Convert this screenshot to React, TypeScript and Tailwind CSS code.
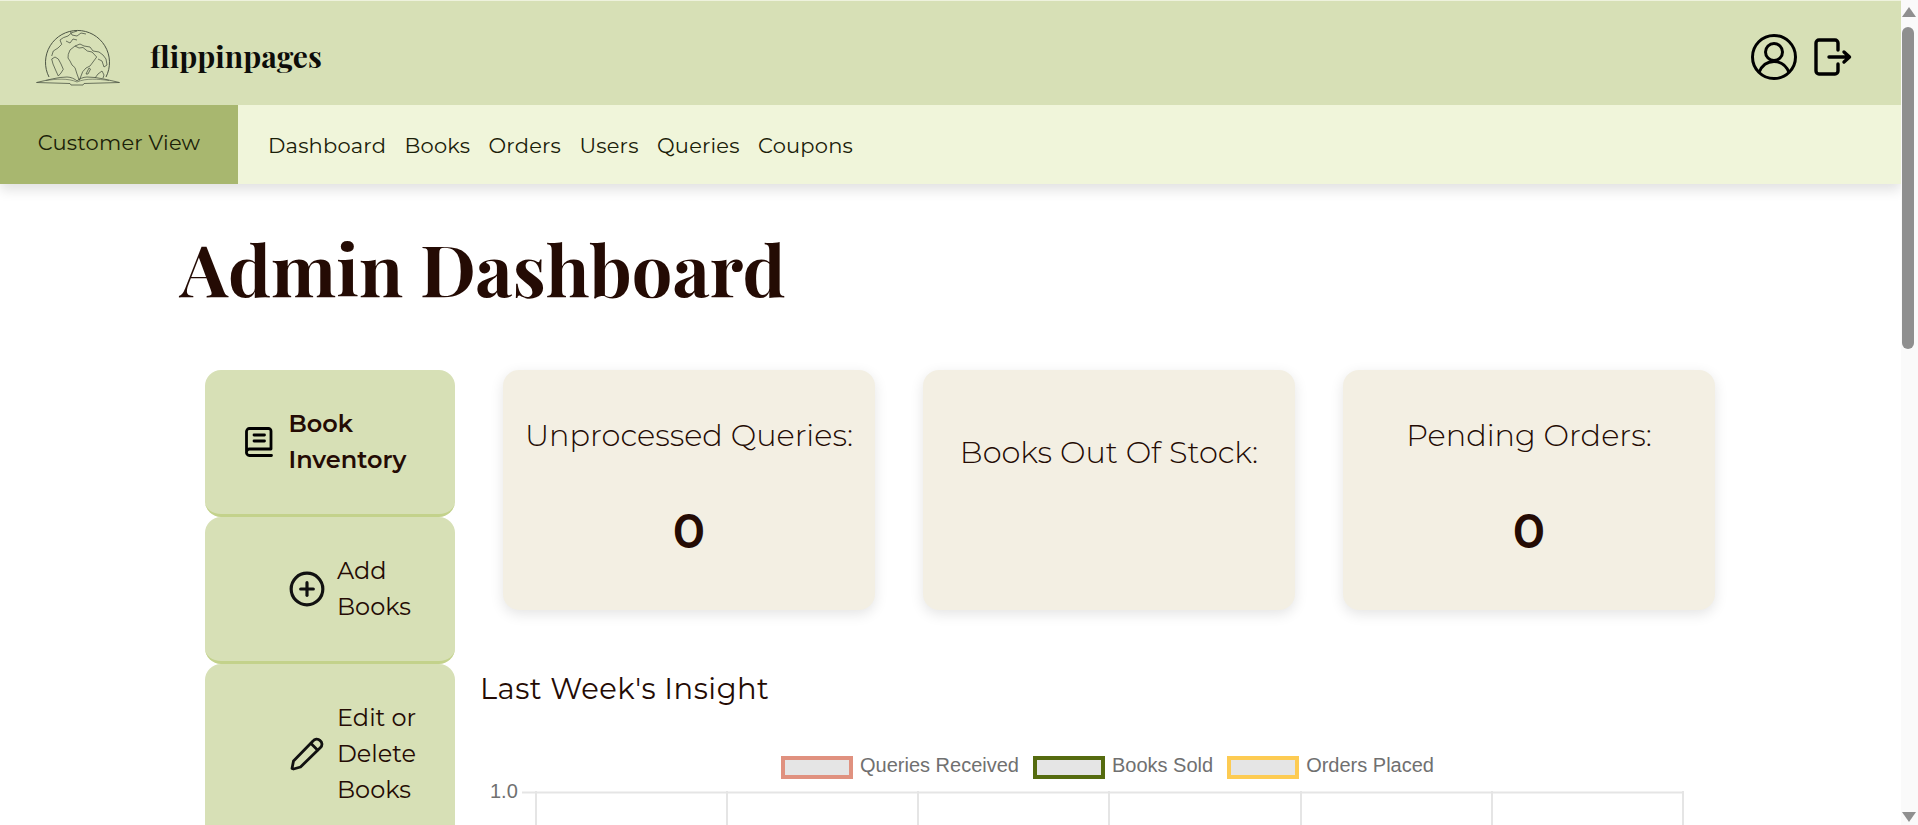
import React from "react";
import { CirclePlus } from "lucide-react";

const sans = "font-['Montserrat','Inter','Noto_Sans',sans-serif]";

function Logo() {
  return (
    <svg width="86" height="58" viewBox="0 0 86 58" fill="none" stroke="#4d5545" strokeWidth="0.8" strokeLinejoin="round" className="shrink-0">
      <path d="M13 49 A32 32 0 1 1 70 49" strokeWidth="1" />
      <path d="M32.3 26.3 L34 22 L39 18 L43 20 L47 19.5 L51.3 23 L56 24 L60.7 29 L57 34 L54 38 L50 40 L46.7 43.7 L45 48 L43.3 52.3 L41 46 L39 39.7 L36 37 L34 33 L32 30 Z" />
      <path d="M39 18 L44 16 L48 18 L54 19 L57 23 L63 24 L67 27 L70 31 L71 37 L68 39 L66 33 L62 31" />
      <path d="M15.7 28 L17.3 23 L22 20 L25.7 16.3 L24 12 L27.3 9.7 L32 8 L35.7 4.7 L41.3 3" />
      <path d="M15.7 31 L19 29 L22.3 31 L25 36 L27.3 41.3 L25 45 L22.3 48 L20 43 L17 36 Z" />
      <path d="M34 3 L36 7 L41 8 L45 5 L50 6 M30 13 L34 15 L37 11 L41 12" />
      <path d="M59 50 L62 46 L66 43 L68 47 L67 50 M50 46 L53 40 L54.5 41 L52 46 Z" />
      <path d="M0.5 54.5 C12 52 22 49 31 49 C35 49 39 51 41 53 C43 51 47 49 51 49 C62 49 72 52 83.5 54.5 L48 55.5 L47 57 L35 57 L34 55.5 Z" />
      <path d="M10 52.5 C20 51 32 50 41 54 C50 50 62 51 73 52.5" strokeWidth="0.6" />
    </svg>
  );
}

function Logout() {
  return (
    <svg width="38" height="38" viewBox="0 0 38 38" fill="none" stroke="#000" strokeWidth="3.4" strokeLinecap="round" strokeLinejoin="round" className="shrink-0">
      <path d="M24 12 V5 A3 3 0 0 0 21 2 H5 A3 3 0 0 0 2 5 V33 A3 3 0 0 0 5 36 H21 A3 3 0 0 0 24 33 V26" />
      <path d="M15 19 H35 M30 14 L35.5 19 L30 24" />
    </svg>
  );
}

function UserIcon() {
  return (
    <svg width="46" height="46" viewBox="0 0 46 46" fill="none" stroke="#000" strokeWidth="3" className="shrink-0">
      <circle cx="23" cy="23" r="21.5" />
      <circle cx="23" cy="18" r="8.5" />
      <path d="M8 38.5 C11 31 17 27.5 23 27.5 C29 27.5 35 31 38 38.5" />
    </svg>
  );
}

function BookIcon() {
  return (
    <svg width="28" height="30" viewBox="0 0 28 30" fill="none" stroke="#000" strokeWidth="2.8" strokeLinecap="round" strokeLinejoin="round" className="shrink-0">
      <path d="M1.5 25 V4.5 A3 3 0 0 1 4.5 1.5 H23.5 A2.5 2.5 0 0 1 26 4 V22 H4.5 A3 3 0 0 0 1.5 25 A3 3 0 0 0 4.5 28.5 H26.5" />
      <path d="M9 8 H19.5 M9 14 H19.5" />
    </svg>
  );
}

function PencilIcon() {
  return (
    <svg width="34" height="34" viewBox="0 0 34 34" fill="none" stroke="#111" strokeWidth="2.8" strokeLinecap="round" strokeLinejoin="round" className="shrink-0">
      <path d="M2 31.5 L3.5 24 L23 4 A4.5 4.5 0 0 1 30 3.5 A4.5 4.5 0 0 1 30.5 10.5 L10.5 30 L3.5 32 Z" />
      <path d="M21 6.5 L27.5 13" />
    </svg>
  );
}

function SideItem({ icon, children, active }: { icon: React.ReactNode; children: React.ReactNode; active?: boolean }) {
  return (
    <div className={`shrink-0 rounded-2xl border-b-[3px] border-[#c3d28b] bg-[#d7e0b6] flex items-center pt-[36px] pb-[36px] text-[24px] leading-[36px] text-[#240b04] ${active ? "font-semibold pl-[40px] gap-[15.5px]" : "font-normal pl-[83px] gap-[11px]"}`}>
      {icon}
      <div>{children}</div>
    </div>
  );
}

function StatCard({ label, value }: { label: string; value?: string }) {
  return (
    <div className="w-[372px] h-[240px] rounded-2xl bg-[#f3efe3] shadow-[0_4px_14px_rgba(0,0,0,0.11)] flex flex-col items-center justify-center text-[#240b04]">
      <div className="text-[30.4px] leading-[40px] font-light whitespace-nowrap">{label}</div>
      <div className={`mt-[42px] text-[48px] font-semibold leading-[67px] ${value ? "h-[67px]" : "h-[33px]"}`}>{value}</div>
    </div>
  );
}

function Legend({ color, label }: { color: string; label: string }) {
  return (
    <div className="flex items-center gap-[7px]">
      <div className="w-[72px] h-[23px] border-4 bg-[#e5e5e5]" style={{ borderColor: color }} />
      <span className="pb-[3px]">{label}</span>
    </div>
  );
}

export default function App() {
  const lines = [14, 205, 396, 587, 779, 970, 1161];
  return (
    <div className={`h-screen w-full overflow-hidden flex bg-white ${sans}`}>
      <div className="flex-1 min-w-0 flex flex-col overflow-hidden">
        <header className="relative z-10 shrink-0 shadow-[0_6px_12px_rgba(0,0,0,0.12)]">
          <div className="h-[105px] border-t border-[#eef2dd] bg-[#d7e0b6] flex items-center pt-[7px] pl-[36px] pr-[49px]">
            <Logo />
            <div className="ml-[28px] font-['Playfair_Display','Liberation_Serif',serif] font-bold text-[30px] text-[#0d0d0a]">flippinpages</div>
            <div className="ml-auto flex items-center gap-[17px]">
              <UserIcon />
              <Logout />
            </div>
          </div>
          <div className="h-[79px] bg-[#f0f5da] flex text-[#1a2008]">
            <div className="w-[238px] bg-[#a8b76f] flex items-center justify-center pb-[3px] text-[21px] tracking-[0.2px]">Customer View</div>
            <nav className="flex items-center gap-[18.4px] pl-[30px] pt-[2px] text-[21px] tracking-[0.2px]">
              <span>Dashboard</span>
              <span>Books</span>
              <span>Orders</span>
              <span>Users</span>
              <span>Queries</span>
              <span>Coupons</span>
            </nav>
          </div>
        </header>

        <main className="flex-1 min-h-0 overflow-hidden">
          <h1 className="ml-[180px] mt-[44px] h-[78px] font-['Playfair_Display','Liberation_Serif',serif] font-bold text-[72px] leading-[78px] text-[#240b04] whitespace-nowrap">Admin Dashboard</h1>
          <div className="ml-[205px] mt-[64px] flex">
            <aside className="w-[250px] shrink-0 flex flex-col">
              <SideItem active icon={<BookIcon />}><>Book<br />Inventory</></SideItem>
              <SideItem icon={<CirclePlus size={38} strokeWidth={2} color="#111" className="shrink-0" />}><>Add<br />Books</></SideItem>
              <SideItem icon={<div className="w-[38px] flex justify-center"><PencilIcon /></div>}><>Edit or<br />Delete<br />Books</></SideItem>
            </aside>
            <section className="ml-[25px] w-[1240px]">
              <div className="flex gap-[48px] ml-[23px]">
                <StatCard label="Unprocessed Queries:" value="0" />
                <StatCard label="Books Out Of Stock:" />
                <StatCard label="Pending Orders:" value="0" />
              </div>
              <h2 className="mt-[59px] text-[29px] leading-[40px] font-normal tracking-[0.5px] text-[#240b04]">Last Week's Insight</h2>
              <div className="mt-[45px] flex justify-start gap-[14px] pl-[301px] font-['Liberation_Sans',Arial,sans-serif] text-[20px] leading-[23px] text-[#707070]">
                <Legend color="#e0917f" label="Queries Received" />
                <Legend color="#556b0f" label="Books Sold" />
                <Legend color="#fdcb52" label="Orders Placed" />
              </div>
              <div className="mt-[11px] flex items-start">
                <div className="w-[42px] pl-[10px] font-['Liberation_Sans',Arial,sans-serif] text-[20px] leading-[20px] text-[#707070] -mt-[10px]">1.0</div>
                <svg width="1180" height="60" className="shrink-0" fill="none" stroke="#e5e5e5" strokeWidth="2">
                  <path d="M0 1.5 H1162" />
                  {lines.map((x) => (
                    <path key={x} d={`M${x} 0 V60`} />
                  ))}
                </svg>
              </div>
            </section>
          </div>
        </main>
      </div>

      <div className="w-[17px] shrink-0 bg-[#fafafa] flex flex-col items-start pl-[1px]">
        <div className="mt-[7px] w-0 h-0 border-x-[7px] border-x-transparent border-b-[10px] border-b-[#8f8f8f]" />
        <div className="mt-[10px] w-[12px] h-[322px] rounded-full bg-[#8f8f8f]" />
        <div className="mt-auto mb-[3px] w-0 h-0 border-x-[7px] border-x-transparent border-t-[10px] border-t-[#8f8f8f]" />
      </div>
    </div>
  );
}
